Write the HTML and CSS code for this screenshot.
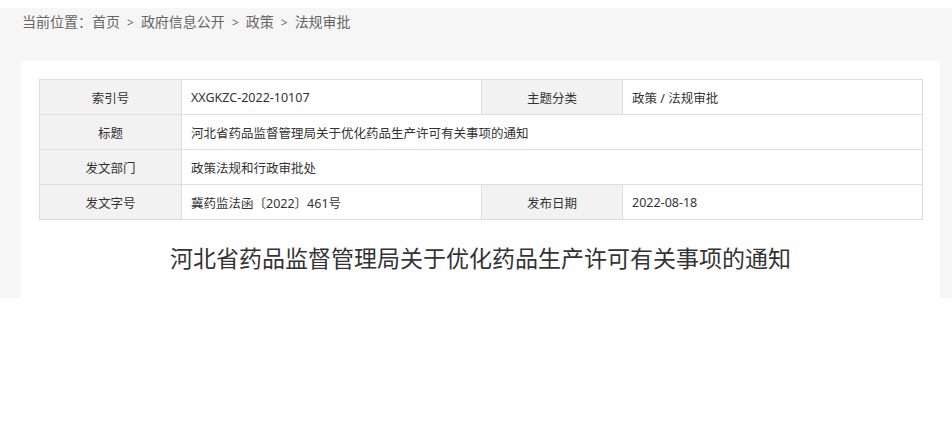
FILE: index.html
```html
<!DOCTYPE html>
<html lang="zh-CN">
<head>
<meta charset="utf-8">
<title>法规审批</title>
<link rel="stylesheet" href="styles.css">
</head>
<body>
<div class="page">
  <div class="crumb">当前位置：<a>首页</a><span class="sep">&gt;</span><a>政府信息公开</a><span class="sep">&gt;</span><a>政策</a><span class="sep">&gt;</span><a>法规审批</a></div>
  <div class="panel">
    <table class="info">
      <colgroup><col class="c1"><col class="c2"><col class="c3"><col class="c4"></colgroup>
      <tr><th>索引号</th><td>XXGKZC-2022-10107</td><th>主题分类</th><td>政策 / 法规审批</td></tr>
      <tr><th>标题</th><td colspan="3">河北省药品监督管理局关于优化药品生产许可有关事项的通知</td></tr>
      <tr><th>发文部门</th><td colspan="3">政策法规和行政审批处</td></tr>
      <tr><th>发文字号</th><td>冀药监法函〔2022〕461号</td><th>发布日期</th><td>2022-08-18</td></tr>
    </table>
    <h1 class="title">河北省药品监督管理局关于优化药品生产许可有关事项的通知</h1>
  </div>
</div>
</body>
</html>
```

FILE: styles.css
```css
html, body { margin: 0; padding: 0; background: #fff; }
body { font-family: "Noto Sans", "Noto Sans CJK SC", sans-serif; color: #333; }
.page {
  margin-top: 8px;
  height: 290px;
  overflow: hidden;
  background: #f6f6f6;
  padding: 0 12px 0 21px;
}
.crumb {
  height: 53px;
  line-height: 28px;
  font-size: 14px;
  color: #666;
  padding-left: 1px;
}
.crumb .sep { margin: 0 7px; font-size: 12px; }
.panel {
  background: #fff;
  padding: 18px 18px 40px;
  min-height: 300px;
}
.info {
  width: 884px;
  border-collapse: collapse;
  table-layout: fixed;
  font-size: 12.5px;
}
.info .c1 { width: 142px; }
.info .c2 { width: 300px; }
.info .c3 { width: 141px; }
.info .c4 { width: 300px; }
.info th, .info td {
  border: 1px solid #ddd;
  height: 34px;
  padding: 0;
  color: #333;
  font-weight: normal;
}
.info th { background: #f2f2f2; text-align: center; }
.info td { background: #fff; text-align: left; padding-left: 9px; }
.title {
  margin: 20px 0 0;
  font-size: 23px;
  font-weight: normal;
  text-align: center;
  color: #333;
  line-height: 36px;
}
```
